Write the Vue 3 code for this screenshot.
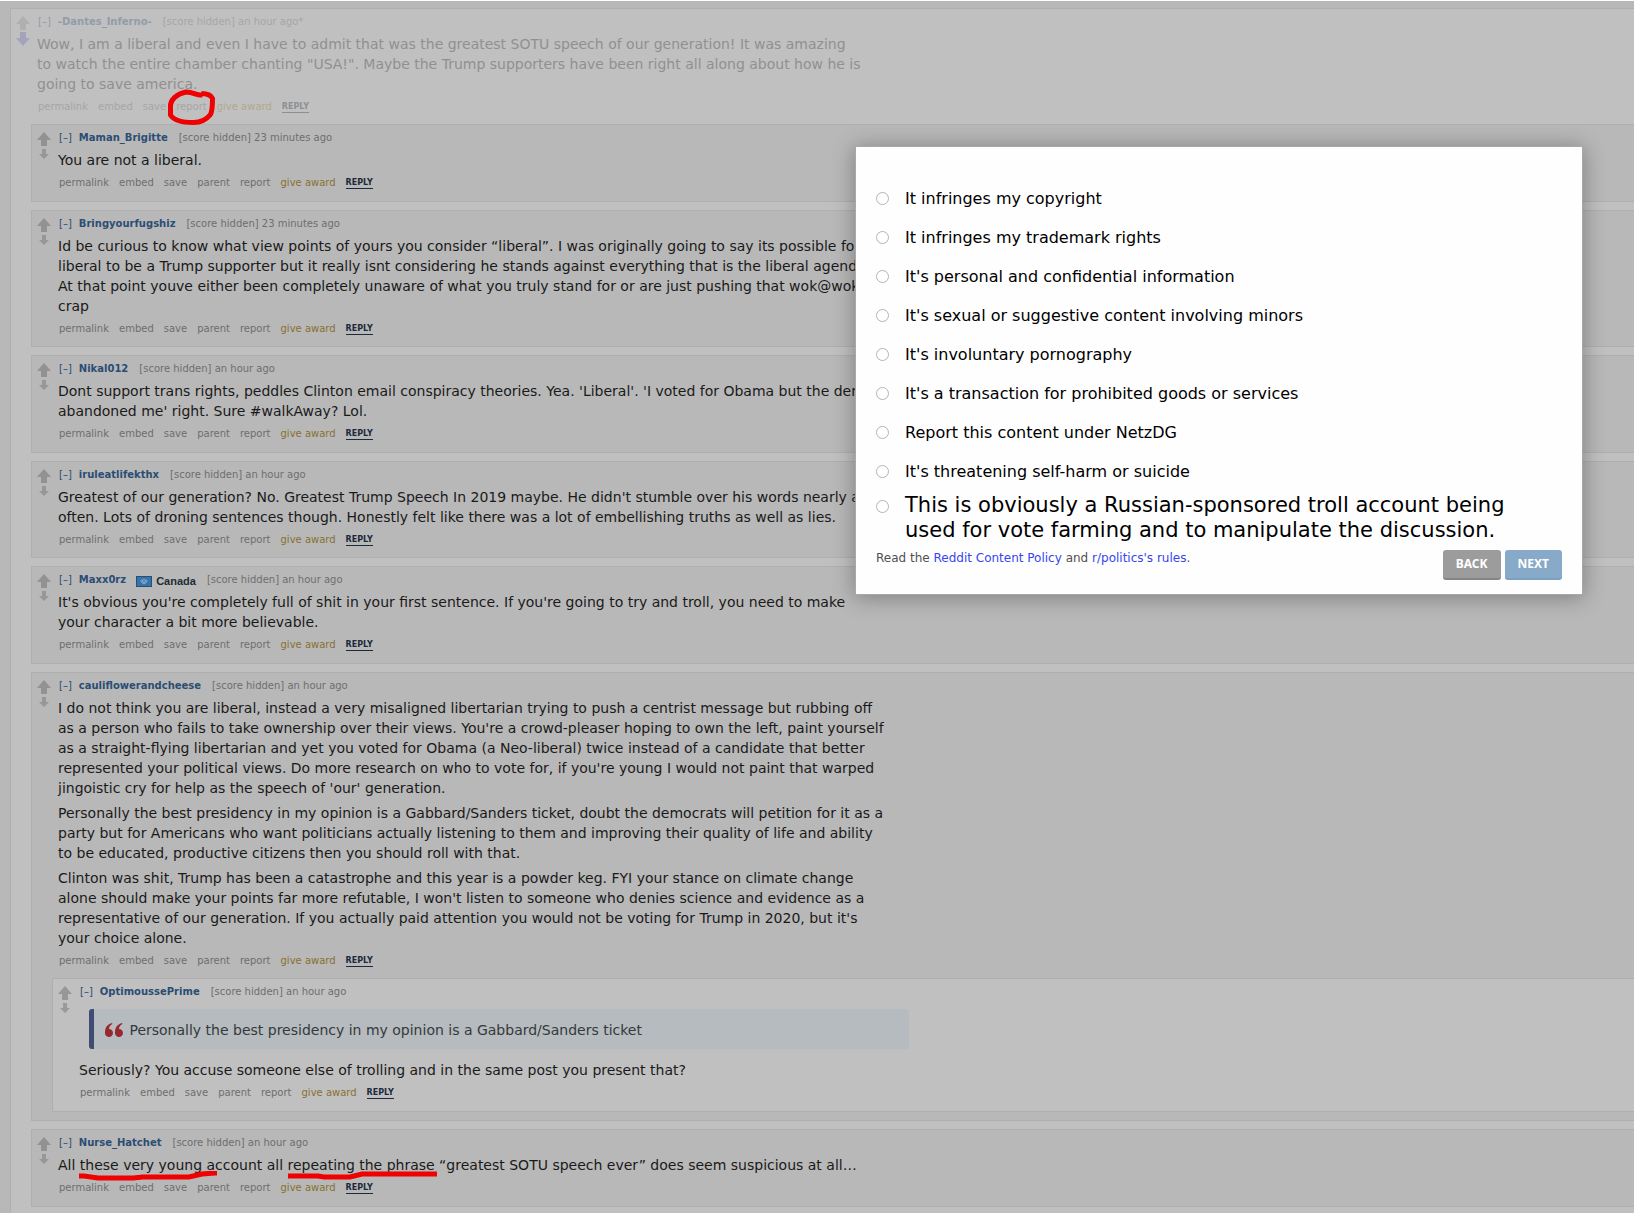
<script setup>
import { ref } from 'vue'

const actions = ['permalink', 'embed', 'save', 'parent', 'report']

const root = {
  author: '-Dantes_Inferno-',
  age: 'an hour ago*',
  lines: [
    'Wow, I am a liberal and even I have to admit that was the greatest SOTU speech of our generation! It was amazing',
    'to watch the entire chamber chanting "USA!". Maybe the Trump supporters have been right all along about how he is',
    'going to save america.'
  ]
}

const comments = [
  {
    author: 'Maman_Brigitte',
    age: '23 minutes ago',
    paragraphs: [['You are not a liberal.']]
  },
  {
    author: 'Bringyourfugshiz',
    age: '23 minutes ago',
    paragraphs: [[
      'Id be curious to know what view points of yours you consider “liberal”. I was originally going to say its possible for a',
      'liberal to be a Trump supporter but it really isnt considering he stands against everything that is the liberal agenda.',
      'At that point youve either been completely unaware of what you truly stand for or are just pushing that wok@woke',
      'crap'
    ]]
  },
  {
    author: 'Nikal012',
    age: 'an hour ago',
    paragraphs: [[
      "Dont support trans rights, peddles Clinton email conspiracy theories. Yea. 'Liberal'. 'I voted for Obama but the dems",
      "abandoned me' right. Sure #walkAway? Lol."
    ]]
  },
  {
    author: 'iruleatlifekthx',
    age: 'an hour ago',
    paragraphs: [[
      "Greatest of our generation? No. Greatest Trump Speech In 2019 maybe. He didn't stumble over his words nearly as",
      'often. Lots of droning sentences though. Honestly felt like there was a lot of embellishing truths as well as lies.'
    ]]
  },
  {
    author: 'Maxx0rz',
    flair: 'Canada',
    age: 'an hour ago',
    paragraphs: [[
      "It's obvious you're completely full of shit in your first sentence. If you're going to try and troll, you need to make",
      'your character a bit more believable.'
    ]]
  },
  {
    author: 'cauliflowerandcheese',
    age: 'an hour ago',
    paragraphs: [
      [
        'I do not think you are liberal, instead a very misaligned libertarian trying to push a centrist message but rubbing off',
        "as a person who fails to take ownership over their views. You're a crowd-pleaser hoping to own the left, paint yourself",
        'as a straight-flying libertarian and yet you voted for Obama (a Neo-liberal) twice instead of a candidate that better',
        "represented your political views. Do more research on who to vote for, if you're young I would not paint that warped",
        "jingoistic cry for help as the speech of 'our' generation."
      ],
      [
        'Personally the best presidency in my opinion is a Gabbard/Sanders ticket, doubt the democrats will petition for it as a',
        'party but for Americans who want politicians actually listening to them and improving their quality of life and ability',
        'to be educated, productive citizens then you should roll with that.'
      ],
      [
        'Clinton was shit, Trump has been a catastrophe and this year is a powder keg. FYI your stance on climate change',
        "alone should make your points far more refutable, I won't listen to someone who denies science and evidence as a",
        "representative of our generation. If you actually paid attention you would not be voting for Trump in 2020, but it's",
        'your choice alone.'
      ]
    ],
    replies: [
      {
        author: 'OptimoussePrime',
        age: 'an hour ago',
        quote: 'Personally the best presidency in my opinion is a Gabbard/Sanders ticket',
        paragraphs: [['Seriously? You accuse someone else of trolling and in the same post you present that?']]
      }
    ]
  },
  {
    author: 'Nurse_Hatchet',
    age: 'an hour ago',
    marked: true,
    paragraphs: [['All these very young account all repeating the phrase “greatest SOTU speech ever” does seem suspicious at all…']]
  }
]

const reasons = [
  'It infringes my copyright',
  'It infringes my trademark rights',
  "It's personal and confidential information",
  "It's sexual or suggestive content involving minors",
  "It's involuntary pornography",
  "It's a transaction for prohibited goods or services",
  'Report this content under NetzDG',
  "It's threatening self-harm or suicide"
]
const reason = ref('')
</script>

<template>
  <div class="page">
    <main class="comment root">
      <div class="votes">
        <button class="vote" aria-label="upvote"><svg width="14" height="14" viewBox="0 0 14 14"><path d="M7 0l7 8h-4v6H4V8H0z" fill="#b0b0b0" /></svg></button>
        <button class="vote" aria-label="downvote"><svg width="14" height="14" viewBox="0 0 14 14"><path d="M7 14l7-8h-4V0H4v6H0z" fill="#a3a3bd" /></svg></button>
      </div>
      <div class="entry faded">
        <p class="tagline">
          <a href="#">[–]</a><a class="author" href="#">{{ root.author }}</a>
          <span class="meta">[score hidden] {{ root.age }}</span>
        </p>
        <div class="body"><p>{{ root.lines.join('\n') }}</p></div>
        <div class="actions">
          <a href="#">permalink</a><a href="#">embed</a><a href="#">save</a>
          <span class="circled">
            <a href="#">report</a>
            <svg class="ring" width="52" height="40" viewBox="0 0 52 40" fill="none"><path d="M36 8c-5 1-8-3-16-3C10 7 5 13 4.500 18v10c3 5 12 7.500 23 7.500 7 0 13-3 17-8 2-4 2-10 2-16-2-4-6-5-11-5" stroke="#f00000" stroke-width="5" stroke-linejoin="round" /></svg>
          </span>
          <a class="award" href="#">give award</a><a class="reply" href="#">REPLY</a>
        </div>
      </div>

      <section class="children">
        <article v-for="c in comments" :key="c.author" class="comment" :class="{ parent: c.replies }">
          <div class="votes">
            <button class="vote" aria-label="upvote"><svg width="14" height="14" viewBox="0 0 14 14"><path d="M7 0l7 8h-4v6H4V8H0z" fill="#929292" /></svg></button>
            <button class="vote" aria-label="downvote"><svg width="14" height="14" viewBox="0 0 14 14"><path d="M7 11l5-5H9V1H5v5H2z" fill="#979797" /></svg></button>
          </div>
          <div class="entry">
            <p class="tagline">
              <a href="#">[–]</a><a class="author" href="#">{{ c.author }}</a>
              <span v-if="c.flair" class="flair">
                <svg width="16" height="11" viewBox="0 0 16 11"><path d="M0 0h16v11H0z" fill="#234f7c" /><path d="M1 1h14v9H1z" fill="#3673a9" /><g fill="none" stroke="#9db3c5"><circle cx="8" cy="5" r="1.5" /><path d="M5.300 3.300c-.8 2 .2 4.200 2.700 4.500 2.500-.3 3.500-2.500 2.700-4.500" stroke-width=".8" /></g></svg>
                {{ c.flair }}
              </span>
              <span class="meta">[score hidden] {{ c.age }}</span>
            </p>
            <div class="body">
              <p v-for="(p, i) in c.paragraphs" :key="i">{{ p.join('\n') }}</p>
              <svg v-if="c.marked" class="strokes" width="362" height="10" viewBox="0 0 362 10" fill="none" stroke="#f00000" stroke-width="5"><path d="M0 5h5l14 2h35l10-1h46l13-3 13-1h2M209 5h30l6 1h26l12-3h75" /></svg>
            </div>
            <div class="actions">
              <a v-for="a in actions" :key="a" href="#">{{ a }}</a>
              <a class="award" href="#">give award</a><a class="reply" href="#">REPLY</a>
            </div>
          </div>

          <section v-if="c.replies" class="children">
            <article v-for="r in c.replies" :key="r.author" class="comment light">
              <div class="votes">
                <button class="vote" aria-label="upvote"><svg width="14" height="14" viewBox="0 0 14 14"><path d="M7 0l7 8h-4v6H4V8H0z" fill="#979797" /></svg></button>
                <button class="vote" aria-label="downvote"><svg width="14" height="14" viewBox="0 0 14 14"><path d="M7 11l5-5H9V1H5v5H2z" fill="#9a9a9a" /></svg></button>
              </div>
              <div class="entry">
                <p class="tagline">
                  <a href="#">[–]</a><a class="author" href="#">{{ r.author }}</a>
                  <span class="meta">[score hidden] {{ r.age }}</span>
                </p>
                <div class="body">
                  <blockquote>
                    <svg width="18" height="14" viewBox="0 0 18 14" fill="#96292f"><path d="M7 0C3 1 0 4 0 9.500A4 4 0 1 0 4 6C4 4 5 2 7.500 1zM17 0c-4 1-7 4-7 9.500A4 4 0 1 0 14 6c0-2 1-4 3.500-5z" /></svg>
                    {{ r.quote }}
                  </blockquote>
                  <p v-for="(p, i) in r.paragraphs" :key="i">{{ p.join('\n') }}</p>
                </div>
                <div class="actions">
                  <a v-for="a in actions" :key="a" href="#">{{ a }}</a>
                  <a class="award" href="#">give award</a><a class="reply" href="#">REPLY</a>
                </div>
              </div>
            </article>
          </section>
        </article>
      </section>
    </main>

    <form class="dialog" role="dialog" aria-label="Report" @submit.prevent>
      <label v-for="r in reasons" :key="r" class="option">
        <input v-model="reason" type="radio" name="reason" :value="r" />
        <span>{{ r }}</span>
      </label>
      <label class="option large">
        <input v-model="reason" type="radio" name="reason" value="troll" />
        <span>This is obviously a Russian-sponsored troll account being used for vote farming and to manipulate the discussion.</span>
      </label>
      <div class="foot">
        <p>Read the <a href="#">Reddit Content Policy</a> and <a href="#">r/politics's rules</a>.</p>
        <button type="button" class="btn back">BACK</button>
        <button type="submit" class="btn next">NEXT</button>
      </div>
    </form>
  </div>
</template>

<style>
body {
  margin: 0;
}
</style>

<style scoped>
.page {
  position: relative;
  box-sizing: border-box;
  min-height: 100vh;
  padding: 7px 0 0 10px;
  border-top: 1px solid #fff;
  overflow: hidden;
  background: #b8b8b8;
  font: 10px/14px "DejaVu Sans", Verdana, sans-serif;
  color: #6e6e6e;
}
p {
  margin: 0;
}
a {
  color: inherit;
  text-decoration: none;
}
.comment {
  display: grid;
  grid-template-columns: 26px minmax(0, 1fr);
  padding: 6px 0 11px;
  border: 1px solid #afafaf;
  border-right: 0;
  background: #b8b8b8;
}
.comment:nth-child(even) {
  padding-bottom: 10px;
}
.comment.root,
.comment.light {
  background: #c0c0c0;
}
.comment.root {
  padding-bottom: 7px;
  border-bottom: 0;
}
.comment.parent {
  padding-bottom: 8px;
}
.children {
  grid-column: 1 / -1;
  display: flex;
  flex-direction: column;
  gap: 8px;
  margin: 10px 0 0 20px;
}
.votes {
  display: flex;
  flex-direction: column;
  gap: 2px;
  padding: 1px 0 0 5px;
}
.vote {
  width: 14px;
  height: 14px;
  padding: 0;
  border: 0;
  background: none;
}
.vote svg {
  display: block;
}
.tagline {
  display: flex;
  height: 14px;
  padding-left: 1px;
  white-space: nowrap;
  color: #6e6e6e;
}
.tagline a {
  color: #2b4d73;
}
.tagline .author {
  margin-left: 7px;
  font-weight: bold;
}
.tagline .meta {
  margin-left: 11px;
}
.flair {
  display: flex;
  align-items: center;
  gap: 4px;
  height: 16px;
  margin-left: 10px;
  font: bold 11px/16px "Liberation Sans", Arial, sans-serif;
  color: #222c35;
}
.body {
  position: relative;
  max-width: 840px;
  margin-top: 5px;
  font-size: 14px;
  line-height: 20px;
  white-space: pre;
  color: #1a1a1a;
}
.body p + p {
  margin-top: 5px;
}
.actions {
  display: flex;
  gap: 10px;
  margin-top: 6px;
  padding-left: 1px;
  white-space: nowrap;
}
.award {
  color: #887030;
}
.reply {
  align-self: flex-start;
  margin-top: 2px;
  border-bottom: 1px solid #1c2a3c;
  font-size: 8px;
  line-height: 10px;
  font-weight: bold;
  color: #1c2a3c;
}
.faded .tagline,
.faded .actions {
  color: #a6a6a6;
}
.faded .tagline a {
  color: #929ca9;
}
.faded .body {
  color: #909090;
}
.faded .award {
  color: #b3a78e;
}
.faded .reply {
  border-color: #8c9096;
  color: #8c9096;
}
.circled {
  position: relative;
}
.ring {
  position: absolute;
  top: -13px;
  left: -10px;
}
.strokes {
  position: absolute;
  top: 16px;
  left: 21px;
}
blockquote {
  display: flex;
  align-items: center;
  gap: 2px;
  margin: 10px 10px 11px;
  padding: 11px 11px 9px;
  border-left: 5px solid #404c73;
  border-radius: 3px;
  background: #b5bbbe;
  color: #35393b;
}
.dialog {
  position: absolute;
  top: 146px;
  right: 52px;
  box-sizing: border-box;
  width: 726px;
  padding: 32px 20px 14px;
  background: #fffeff;
  box-shadow: 0 0 0 1px #a8a8a8, 0 2px 20px 2px rgba(0, 0, 0, 0.3);
}
.option {
  display: flex;
  align-items: center;
  gap: 16px;
  min-height: 39px;
  font-size: 16px;
  line-height: 20px;
  color: #000;
}
.option input {
  appearance: none;
  flex: none;
  width: 13px;
  height: 13px;
  margin: 0;
  border: 1px solid #b4b4b4;
  border-radius: 50%;
  background: #fff;
}
.option input:checked {
  background: #404c73;
}
.option.large {
  align-items: flex-start;
  font-size: 21px;
  line-height: 25px;
}
.option.large input {
  margin-top: 9px;
}
.option.large span {
  margin-top: 2px;
  padding-right: 30px;
}
.foot {
  display: flex;
  gap: 4px;
  margin-top: 6px;
  font-size: 12px;
  line-height: 16px;
  color: #505050;
}
.foot p {
  flex: 1;
  padding-top: 1px;
}
.foot a {
  color: #3545ee;
}
.btn {
  height: 30px;
  margin-top: 1px;
  padding: 0 13px;
  border: 0;
  border-bottom: 2px solid #858585;
  border-radius: 3px;
  background: #9c9c9c;
  font: bold 12px/28px "Noto Sans", sans-serif;
  color: #fff;
}
.btn.next {
  border-color: #7ba0c2;
  background: #88aac9;
}
</style>
